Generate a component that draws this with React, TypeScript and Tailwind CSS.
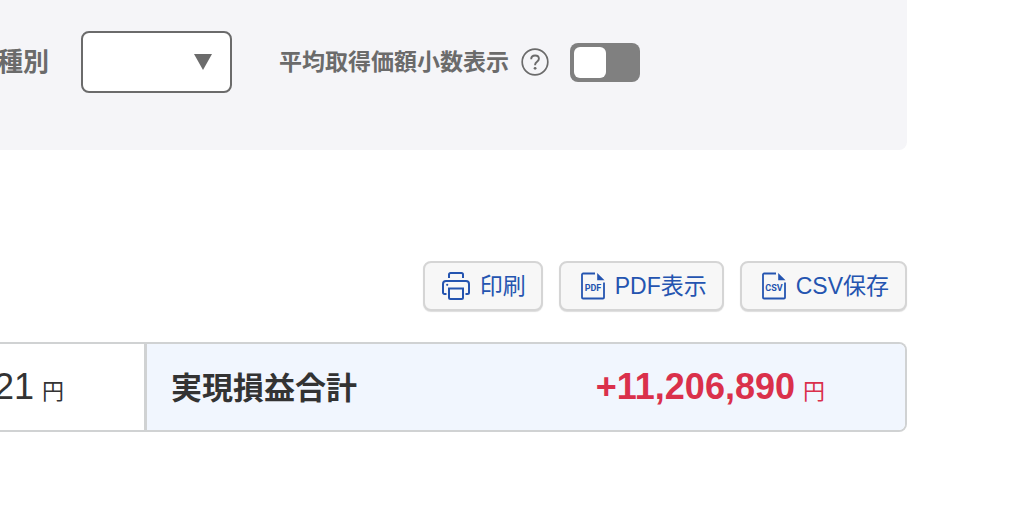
import { FC, ReactNode, useState } from "react";

interface ActionButtonProps {
  icon: ReactNode;
  label: string;
  className: string;
}

interface FileIconProps {
  type: string;
}

interface AmountProps {
  value: string;
  className?: string;
}

const PrintIcon: FC = () => (
  <svg
    className="size-7 shrink-0"
    viewBox="0 0 28 28"
    fill="none"
    stroke="currentColor"
    strokeWidth="2"
    aria-hidden="true"
  >
    <path d="M7 6V2.500C7 1.600 7.600 1 8.500 1h11c.9 0 1.500.6 1.500 1.500V6" />
    <path d="M4.500 22H2.500C1.600 22 1 21.400 1 20.500V12c0-1.700 1.200-3 3-3h20c1.800 0 3 1.300 3 3v8.500c0 .9-.6 1.500-1.500 1.500h-2" />
    <path d="M7 16.500h14v9c0 .9-.6 1.500-1.500 1.500h-11c-.9 0-1.500-.6-1.500-1.500z" />
    <circle cx="5.200" cy="12.800" r="1.100" fill="currentColor" stroke="none" />
  </svg>
);

const FileIcon: FC<FileIconProps> = ({ type }) => (
  <svg
    className="h-7 w-6 shrink-0"
    viewBox="0 0 24 28"
    fill="none"
    aria-hidden="true"
  >
    <path
      d="M14 1.500H2.100c-.6 0-1.100.5-1.100 1.100v22.800c0 .6.500 1.100 1.100 1.100h19.800c.6 0 1.100-.5 1.100-1.100V10.500"
      stroke="currentColor"
      strokeWidth="1.800"
    />
    <path d="M16.200 1v7.200h7.300z" fill="currentColor" />
    <text
      x="12"
      y="19"
      textAnchor="middle"
      fill="currentColor"
      className="font-[Roboto,sans-serif] text-[9px] font-bold"
    >
      {type}
    </text>
  </svg>
);

const ActionButton: FC<ActionButtonProps> = ({ icon, label, className }) => (
  <button
    type="button"
    className={`flex h-[50px] items-center gap-2.5 rounded-lg border-2 border-[#d5d5d5] bg-[#f7f7f7] text-[23px] leading-8 text-[#2454b0] shadow-[0_1px_1px_#dddddd] ${className}`}
  >
    {icon}
    <span>{label}</span>
  </button>
);

const Amount: FC<AmountProps> = ({ value, className = "" }) => (
  <dd
    className={`flex items-baseline gap-2 text-4xl leading-10 whitespace-nowrap ${className}`}
  >
    <span>{value}</span>
    <span className="text-[22px] font-normal">円</span>
  </dd>
);

const App: FC = () => {
  const [showDecimals, setShowDecimals] = useState(false);

  return (
    <main className="overflow-hidden bg-white pr-[117px] font-['Liberation_Sans','Noto_Sans_CJK_JP',sans-serif] text-[#333333]">
      <form className="flex items-center rounded-br-lg bg-[#f5f5f8] pt-[31px] pb-[57px] font-bold text-[#6b6b6b]">
        <label
          htmlFor="kind"
          className="-ml-[3px] text-[26px] leading-10 whitespace-nowrap"
        >
          種別
        </label>
        <div className="relative ml-8 h-[62px] w-[151px] shrink-0">
          <select
            id="kind"
            className="size-full appearance-none rounded-lg border-2 border-[#6b6b6b] bg-white px-4"
          >
            <option value=""></option>
          </select>
          <svg
            className="pointer-events-none absolute top-[23px] right-5 h-4 w-[18px]"
            viewBox="0 0 18 16"
            fill="currentColor"
            aria-hidden="true"
          >
            <path d="M0 0h18L9 16z" />
          </svg>
        </div>
        <label
          htmlFor="decimals"
          className="ml-[47px] text-[23px] leading-8 whitespace-nowrap"
        >
          平均取得価額小数表示
        </label>
        <button type="button" aria-label="ヘルプ" className="ml-3">
          <svg
            className="size-7"
            viewBox="0 0 28 28"
            fill="none"
            stroke="currentColor"
            strokeWidth="1.700"
            aria-hidden="true"
          >
            <circle cx="14" cy="14" r="12.800" />
            <path
              d="M10.200 11.200c0-2.200 1.600-3.700 3.900-3.700 2.200 0 3.800 1.300 3.800 3.300 0 3-3.800 3-3.800 6v.4"
              strokeWidth="1.900"
            />
            <circle
              cx="14.100"
              cy="20.300"
              r="1.400"
              fill="currentColor"
              stroke="none"
            />
          </svg>
        </button>
        <input
          id="decimals"
          type="checkbox"
          role="switch"
          checked={showDecimals}
          onChange={(e) => setShowDecimals(e.target.checked)}
          className="ml-[21px] h-[39px] w-[70px] shrink-0 appearance-none rounded-lg bg-[#808080] p-1 before:block before:h-full before:w-8 before:rounded-md before:bg-white checked:before:ml-auto"
        />
      </form>

      <div className="mt-[111px] flex justify-end gap-4">
        <ActionButton
          icon={<PrintIcon />}
          label="印刷"
          className="pr-[15px] pl-[17px]"
        />
        <ActionButton
          icon={<FileIcon type="PDF" />}
          label="PDF表示"
          className="pr-[15px] pl-5"
        />
        <ActionButton
          icon={<FileIcon type="CSV" />}
          label="CSV保存"
          className="pr-4 pl-5"
        />
      </div>

      <dl className="mt-[31px] flex h-[90px] rounded-r-lg border-2 border-l-0 border-[#d0d2d3]">
        <div className="flex w-36 shrink-0 items-center justify-end pt-1 pr-20">
          <Amount value="21" />
        </div>
        <div className="flex grow items-center justify-between rounded-r-md border-l-[3px] border-[#d0d2d3] bg-[#f1f6fe] pt-1 pr-20 pl-6">
          <dt className="text-[31px] leading-10 font-bold whitespace-nowrap">
            実現損益合計
          </dt>
          <Amount value="+11,206,890" className="font-bold text-[#da304b]" />
        </div>
      </dl>
    </main>
  );
};

export default App;
